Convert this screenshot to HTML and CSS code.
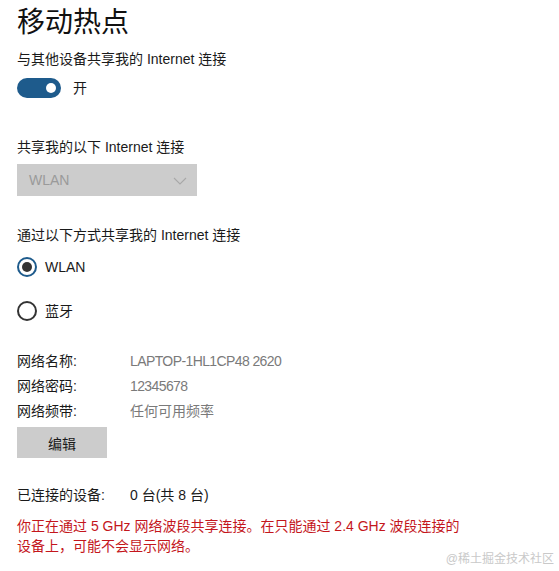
FILE: index.html
```html
<!DOCTYPE html>
<html lang="zh-CN">
<head>
<meta charset="utf-8">
<link rel="stylesheet" href="styles.css">
</head>
<body>
<main class="page">
  <h1 class="title">移动热点</h1>
  <p class="text first">与其他设备共享我的 Internet 连接</p>
  <div class="toggle-row">
    <span class="toggle"><span class="knob"></span></span>
    <span class="text">开</span>
  </div>

  <p class="text label2">共享我的以下 Internet 连接</p>
  <div class="select">
    <span>WLAN</span>
    <svg class="chev" width="14" height="8" viewBox="0 0 14 8"><path d="M1 1 L7 7 L13 1" fill="none" stroke="#a8a8a8" stroke-width="1.1"/></svg>
  </div>

  <p class="text label3">通过以下方式共享我的 Internet 连接</p>
  <div class="radio-row r1">
    <span class="radio checked"><span class="dot"></span></span>
    <span class="text">WLAN</span>
  </div>
  <div class="radio-row r2">
    <span class="radio"></span>
    <span class="text">蓝牙</span>
  </div>

  <div class="info">
    <div class="row"><span class="key">网络名称:</span><span class="val latin">LAPTOP-1HL1CP48 2620</span></div>
    <div class="row"><span class="key">网络密码:</span><span class="val latin">12345678</span></div>
    <div class="row"><span class="key">网络频带:</span><span class="val">任何可用频率</span></div>
  </div>
  <button class="btn">编辑</button>

  <div class="row devices"><span class="key">已连接的设备:</span><span class="dark">0 台(共 8 台)</span></div>

  <p class="warn">你正在通过 5 GHz 网络波段共享连接。在只能通过 2.4 GHz 波段连接的<br>设备上，可能不会显示网络。</p>
</main>
<div class="watermark">@稀土掘金技术社区</div>
</body>
</html>
```
FILE: styles.css
```css
html, body {
  margin: 0;
  padding: 0;
  background: #ffffff;
}
body {
  font-family: "Liberation Sans", "Noto Sans CJK SC", sans-serif;
  color: #1a1a1a;
  width: 559px;
  height: 571px;
  overflow: hidden;
  position: relative;
}
.page {
  padding: 2px 0 0 17px;
  display: flex;
  flex-direction: column;
  align-items: flex-start;
}
.title {
  margin: 0;
  font-family: "Noto Sans CJK SC", sans-serif;
  font-size: 28px;
  line-height: 36px;
  font-weight: 400;
  color: #111;
}
.text {
  margin: 0;
  font-size: 14px;
  line-height: 20px;
}
.first { margin-top: 11px; }
.toggle-row {
  margin-top: 9px;
  display: flex;
  align-items: center;
  gap: 12px;
  height: 20px;
}
.toggle {
  width: 44px;
  height: 20px;
  border-radius: 10px;
  background: #1e5b8c;
  display: flex;
  align-items: center;
  justify-content: flex-end;
  padding-right: 5px;
  box-sizing: border-box;
}
.knob {
  width: 10px;
  height: 10px;
  border-radius: 50%;
  background: #fff;
}
.label2 { margin-top: 39px; }
.select {
  margin-top: 7px;
  width: 180px;
  height: 32px;
  background: #cccccc;
  display: flex;
  align-items: center;
  justify-content: space-between;
  padding: 0 10px 0 12px;
  box-sizing: border-box;
  color: #9a9a9a;
  font-size: 14px;
}
.chev { margin-top: 1px; }
.label3 { margin-top: 29px; }
.radio-row {
  display: flex;
  align-items: center;
  gap: 8px;
  height: 20px;
}
.r1 { margin-top: 12px; }
.r2 { margin-top: 24px; }
.radio {
  width: 20px;
  height: 20px;
  border-radius: 50%;
  border: 2px solid #333;
  box-sizing: border-box;
  display: flex;
  align-items: center;
  justify-content: center;
}
.radio.checked { border-color: #1e5b8c; }
.dot {
  width: 10px;
  height: 10px;
  border-radius: 50%;
  background: #333;
}
.info {
  margin-top: 30px;
  display: flex;
  flex-direction: column;
  gap: 5px;
}
.row {
  display: flex;
  font-size: 14px;
  line-height: 20px;
}
.key { width: 113px; }
.val { color: #7a7a7a; }
.val.latin { letter-spacing: -0.6px; }
.dark { color: #1a1a1a; }
.btn {
  margin-top: 6px;
  width: 90px;
  height: 31px;
  border: none;
  background: #cccccc;
  font-family: inherit;
  font-size: 14px;
  color: #1a1a1a;
  padding: 0;
}
.devices { margin-top: 27px; }
.warn {
  margin: 11px 0 0;
  font-size: 14px;
  line-height: 20px;
  color: #c4161c;
}
.watermark {
  position: absolute;
  right: 5px;
  bottom: 3px;
  font-size: 12px;
  line-height: 18px;
  color: #c9c9c9;
}
```
